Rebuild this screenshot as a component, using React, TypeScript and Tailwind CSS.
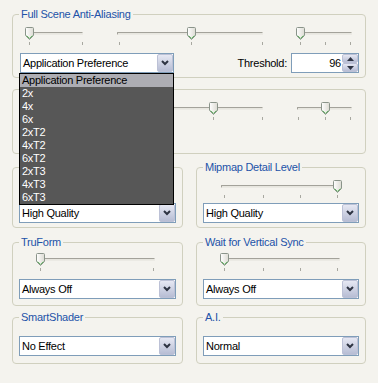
import React from 'react';

type SliderProps = { width: number; thumb: number; ticks: number[]; className?: string };

function Thumb() {
  return (
    <svg width="9" height="13" viewBox="0 0 9 13">
      <defs>
        <linearGradient id="tg" x1="0" y1="0" x2="1" y2="0">
          <stop offset="0" stopColor="#ffffff" />
          <stop offset="1" stopColor="#dcdbd3" />
        </linearGradient>
      </defs>
      <path d="M0.5 1.5 Q0.5 0.5 1.5 0.5 H7.5 Q8.5 0.5 8.5 1.5 V8.5 L4.5 12.5 L0.5 8.5 Z" fill="url(#tg)" stroke="#8a948a" />
      <path d="M1.5 8.6 L4.5 11.4 L7.5 8.6" fill="none" stroke="#63b363" />
    </svg>
  );
}

function Slider({ width, thumb, ticks, className = '' }: SliderProps) {
  return (
    <div className={`relative h-[18px] shrink-0 pt-[5px] ${className}`} style={{ width }}>
      <div className="h-[3px] rounded-[1px] border border-[#a3a29a] border-b-[#ebeae4] border-r-[#ebeae4] bg-[#e7e6df]" />
      {ticks.map(t => (
        <div key={t} className="absolute top-[15px] h-[3px] w-px bg-[#a8a8a0]" style={{ left: t }} />
      ))}
      <div className="absolute top-0" style={{ left: thumb - 4 }}>
        <Thumb />
      </div>
    </div>
  );
}

function DropButton() {
  return (
    <div className="flex h-full w-[16px] shrink-0 items-center justify-center rounded-[2px] border border-[#bcc1d6] bg-linear-to-b from-[#e6e8f3] to-[#b7bdd4]">
      <svg width="8" height="6" viewBox="0 0 8 6">
        <path d="M1 1 L4 4 L7 1" fill="none" stroke="#2e3443" strokeWidth="2" />
      </svg>
    </div>
  );
}

function Combo({ value, className = '', children }: { value: string; className?: string; children?: React.ReactNode }) {
  return (
    <div className={`relative flex h-[20px] items-center border border-[#7f9db9] bg-white ${className}`}>
      <span className="flex-1 truncate pl-[2px] text-black">{value}</span>
      <DropButton />
      {children}
    </div>
  );
}

function Group({ title, className = '', children }: { title?: string; className?: string; children?: React.ReactNode }) {
  return (
    <fieldset className={`min-w-0 rounded-[4px] border border-[#d0d0bf] px-[6px] ${className}`}>
      <legend className="h-[13px] px-[2px] leading-[13px] text-[#2252a8]">{title ?? '\u00a0'}</legend>
      {children}
    </fieldset>
  );
}

const aaModes = ['Application Preference', '2x', '4x', '6x', '2xT2', '4xT2', '6xT2', '2xT3', '4xT3', '6xT3'];

export default function App() {
  return (
    <div className="h-[383px] w-[378px] bg-[#f4f3ee] px-[12px] pt-[8px] font-['Liberation_Sans',Arial,sans-serif] text-[11px] tracking-[-0.25px] text-black">
      {/* Full Scene Anti-Aliasing */}
      <Group title="Full Scene Anti-Aliasing" className="pb-[4px] pt-[6px]">
        <div className="flex">
          <Slider width={58} thumb={4} ticks={[4, 57]} className="ml-[6px]" />
          <Slider width={146} thumb={74} ticks={[2, 74, 145]} className="ml-[34px]" />
          <Slider width={55} thumb={3} ticks={[3, 28, 53]} className="ml-[34px]" />
        </div>
        <div className="mt-[8px] flex items-center">
          <Combo value="Application Preference" className="ml-[1px] w-[154px]">
            <div className="absolute left-[-2px] right-[-1px] top-[calc(100%+1px)] z-10 border border-black bg-[#575757]">
              {aaModes.map((m, i) => (
                <div
                  key={m}
                  className={`h-[13px] pl-[2px] leading-[13px] ${i === 0 ? 'bg-[#adadb3] text-black' : 'text-white'}`}
                >
                  {m}
                </div>
              ))}
            </div>
          </Combo>
          <span className="ml-auto mr-[4px]">Threshold:</span>
          <div className="flex h-[20px] w-[68px] items-center border border-[#7f9db9] bg-white">
            <span className="flex-1 pr-[1px] text-right">96</span>
            <div className="flex h-full w-[16px] flex-col">
              <div className="flex flex-1 items-center justify-center rounded-[2px] border border-[#bcc1d6] bg-linear-to-b from-[#e6e8f3] to-[#b7bdd4]">
                <svg width="7" height="4" viewBox="0 0 7 4"><path d="M0 4 L3.5 0 L7 4 Z" fill="#2e3443" /></svg>
              </div>
              <div className="flex flex-1 items-center justify-center rounded-[2px] border border-[#bcc1d6] bg-linear-to-b from-[#e6e8f3] to-[#b7bdd4]">
                <svg width="7" height="4" viewBox="0 0 7 4"><path d="M0 0 L3.5 4 L7 0 Z" fill="#2e3443" /></svg>
              </div>
            </div>
          </div>
        </div>
      </Group>

      {/* second group: its left half sits under the open list */}
      <Group className="mt-[5px] pb-[5px] pt-[6px]">
        <div className="flex">
          <Slider width={58} thumb={4} ticks={[4, 57]} className="ml-[6px]" />
          <Slider width={146} thumb={96} ticks={[96, 145]} className="ml-[34px]" />
          <Slider width={55} thumb={28} ticks={[1, 28, 53]} className="ml-[34px]" />
        </div>
        <div className="mt-[8px] h-[20px]" />
      </Group>

      <div className="mt-[7px] grid grid-cols-[171px_170px] gap-x-[13px]">
        <Group className="pb-[4px] pt-[6px]">
          <Slider width={119} thumb={116} ticks={[3, 42, 79, 116]} className="ml-[18px]" />
          <Combo value="High Quality" className="mt-[5px]" />
        </Group>
        <Group title="Mipmap Detail Level" className="pb-[4px] pt-[6px]">
          <Slider width={119} thumb={116} ticks={[3, 42, 79, 116]} className="ml-[18px]" />
          <Combo value="High Quality" className="mt-[5px]" />
        </Group>

        <Group title="TruForm" className="mt-[8px] pb-[6px] pt-[4px]">
          <Slider width={118} thumb={3} ticks={[3, 116]} className="ml-[18px]" />
          <Combo value="Always Off" className="mt-[8px]" />
        </Group>
        <Group title="Wait for Vertical Sync" className="mt-[8px] pb-[6px] pt-[4px]">
          <Slider width={119} thumb={3} ticks={[3, 42, 79, 116]} className="ml-[18px]" />
          <Combo value="Always Off" className="mt-[8px]" />
        </Group>

        <Group title="SmartShader" className="mt-[5px] pb-[7px] pt-[12px]">
          <Combo value="No Effect" />
        </Group>
        <Group title="A.I." className="mt-[5px] pb-[7px] pt-[12px]">
          <Combo value="Normal" />
        </Group>
      </div>
    </div>
  );
}
